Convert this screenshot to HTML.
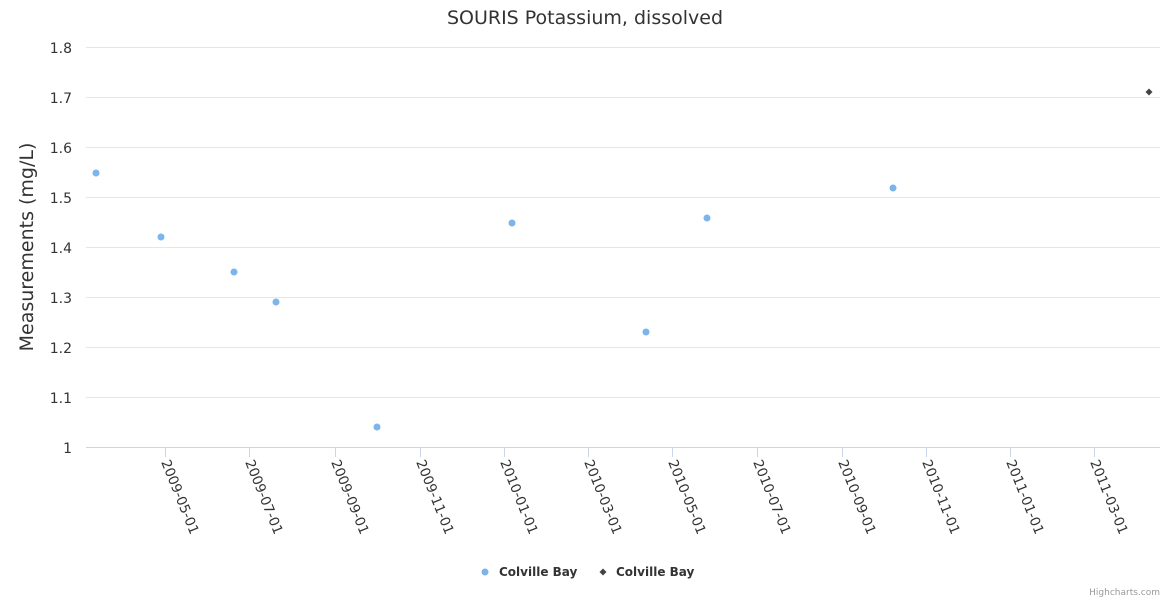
<!DOCTYPE html>
<html><head><meta charset="utf-8"><style>
html,body{margin:0;padding:0;background:#fff;}
svg{display:block;font-family:"DejaVu Sans","Liberation Sans",sans-serif;}
</style></head><body>
<svg width="1170" height="600" viewBox="0 0 1170 600" xmlns="http://www.w3.org/2000/svg">
<rect width="1170" height="600" fill="#fff"/>
<text x="585" y="24" text-anchor="middle" font-size="19" fill="#333">SOURIS Potassium, dissolved</text>
<g stroke="#e6e6e6" stroke-width="1">
<line x1="86" x2="1160" y1="47.5" y2="47.5"/>
<line x1="86" x2="1160" y1="97.5" y2="97.5"/>
<line x1="86" x2="1160" y1="147.5" y2="147.5"/>
<line x1="86" x2="1160" y1="197.5" y2="197.5"/>
<line x1="86" x2="1160" y1="247.5" y2="247.5"/>
<line x1="86" x2="1160" y1="297.5" y2="297.5"/>
<line x1="86" x2="1160" y1="347.5" y2="347.5"/>
<line x1="86" x2="1160" y1="397.5" y2="397.5"/>
</g>
<line x1="86" x2="1160" y1="447.5" y2="447.5" stroke="#ccd6eb"/>
<g font-size="14" fill="#333" text-anchor="end">
<text x="72" y="53">1.8</text><text x="72" y="103">1.7</text><text x="72" y="153">1.6</text>
<text x="72" y="203">1.5</text><text x="72" y="253">1.4</text><text x="72" y="303">1.3</text>
<text x="72" y="353">1.2</text><text x="72" y="403">1.1</text><text x="72" y="453">1</text>
</g>
<text transform="translate(33,247) rotate(-90)" text-anchor="middle" font-size="19" fill="#333">Measurements (mg/L)</text>
<g stroke="#ccd6eb">
<line x1="165.5" x2="165.5" y1="447" y2="457"/><line x1="249.5" x2="249.5" y1="447" y2="457"/>
<line x1="335.5" x2="335.5" y1="447" y2="457"/><line x1="420.5" x2="420.5" y1="447" y2="457"/>
<line x1="504.5" x2="504.5" y1="447" y2="457"/><line x1="588.5" x2="588.5" y1="447" y2="457"/>
<line x1="672.5" x2="672.5" y1="447" y2="457"/><line x1="757.5" x2="757.5" y1="447" y2="457"/>
<line x1="842.5" x2="842.5" y1="447" y2="457"/><line x1="926.5" x2="926.5" y1="447" y2="457"/>
<line x1="1010.5" x2="1010.5" y1="447" y2="457"/><line x1="1094.5" x2="1094.5" y1="447" y2="457"/>
</g>
<g font-size="13.6" fill="#333">
<text transform="translate(161,462) rotate(68)">2009-05-01</text>
<text transform="translate(245,462) rotate(68)">2009-07-01</text>
<text transform="translate(331,462) rotate(68)">2009-09-01</text>
<text transform="translate(416,462) rotate(68)">2009-11-01</text>
<text transform="translate(500,462) rotate(68)">2010-01-01</text>
<text transform="translate(584,462) rotate(68)">2010-03-01</text>
<text transform="translate(668,462) rotate(68)">2010-05-01</text>
<text transform="translate(753,462) rotate(68)">2010-07-01</text>
<text transform="translate(838,462) rotate(68)">2010-09-01</text>
<text transform="translate(922,462) rotate(68)">2010-11-01</text>
<text transform="translate(1006,462) rotate(68)">2011-01-01</text>
<text transform="translate(1090,462) rotate(68)">2011-03-01</text>
</g>
<g fill="#7cb5ec">
<circle cx="96" cy="173" r="3.5"/><circle cx="161" cy="237" r="3.5"/><circle cx="234" cy="272" r="3.5"/>
<circle cx="276" cy="302" r="3.5"/><circle cx="377" cy="427" r="3.5"/><circle cx="512" cy="223" r="3.5"/>
<circle cx="646" cy="332" r="3.5"/><circle cx="707" cy="218" r="3.5"/><circle cx="893" cy="188" r="3.5"/>
<circle cx="485" cy="572" r="3.5"/>
</g>
<g fill="#434348">
<path d="M1149 88.5 L1152.5 92 L1149 95.5 L1145.5 92 Z"/>
<path d="M603 568.5 L606.5 572 L603 575.5 L599.5 572 Z"/>
</g>
<g font-size="12" font-weight="bold" fill="#333">
<text x="499" y="576">Colville Bay</text>
<text x="616" y="576">Colville Bay</text>
</g>
<text x="1160" y="595" text-anchor="end" font-size="9" fill="#999">Highcharts.com</text>
</svg>
</body></html>
